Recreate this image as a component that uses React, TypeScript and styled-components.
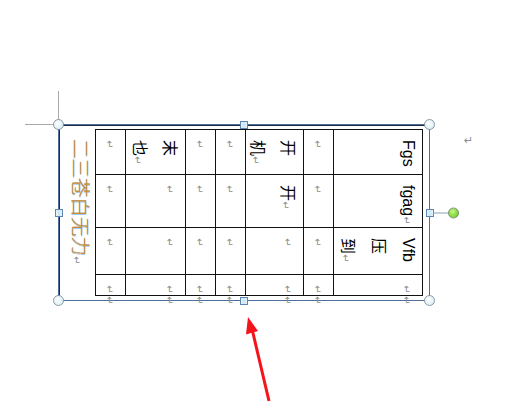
import React from "react";
import styled, { createGlobalStyle } from "styled-components";

const Global = createGlobalStyle`
  html, body { margin: 0; padding: 0; background: #fff; }
  body { font-family: "Liberation Sans", "Noto Sans CJK SC", sans-serif; }
`;

const Canvas = styled.div`
  position: relative;
  width: 529px;
  height: 415px;
  overflow: hidden;
  background: #fff;
`;

/* crop corner mark of the page margin */
const CropMark = styled.div`
  position: absolute;
  left: 25px;
  top: 91px;
  width: 33px;
  height: 33px;
  border-right: 1px solid #a8a8a8;
  border-bottom: 1px solid #a8a8a8;
`;

const TextBox = styled.div`
  position: absolute;
  left: 58px;
  top: 124px;
  width: 372px;
  height: 177px;
  box-sizing: border-box;
  border: 1px solid #4f6f9a;
  box-shadow: inset 1px 1px 0 #1c2c44;
  display: flex;
  align-items: flex-start;
  padding-top: 4px;
`;

const SideText = styled.div`
  width: 36px;
  height: 150px;
  box-sizing: border-box;
  writing-mode: vertical-rl;
  text-orientation: sideways;
  font-family: "Noto Sans CJK SC", sans-serif;
  font-weight: 300;
  font-size: 19.5px;
  line-height: 28px;
  padding-top: 10px;
  color: #c98e34;
  text-shadow: 1px 0 0 rgba(70, 150, 230, 0.5), -0.5px 0 0 rgba(120, 70, 20, 0.5);
`;

const TableWrap = styled.div`
  display: flex;
  flex-direction: column;
`;

const COLS = "29px 59px 29px 29px 57px 29px 88px";

const Grid = styled.div`
  display: grid;
  grid-template-columns: ${COLS};
  grid-template-rows: 44px 52px 46px 20px;
  gap: 1px;
  background: #111;
  border: 1px solid #111;
`;

const RowEnds = styled.div`
  display: grid;
  grid-template-columns: ${COLS};
  grid-template-rows: 14px;
  column-gap: 1px;
  padding: 0 1px;
`;

const Cell = styled.div<{ $bare?: boolean }>`
  background: ${(p) => (p.$bare ? "transparent" : "#fff")};
  writing-mode: vertical-rl;
  text-orientation: sideways;
  font-family: "Liberation Sans", "Noto Sans CJK SC", sans-serif;
  font-size: 16px;
  line-height: 28.5px;
  padding-top: ${(p) => (p.$bare ? "0px" : "10px")};
  box-sizing: border-box;
  color: #000;
  white-space: nowrap;
`;

const Han = styled.span`
  font-family: "Noto Sans CJK SC", sans-serif;
  font-weight: 400;
`;

const Line = styled.div``;

const Mark = styled.span`
  font-family: "DejaVu Sans", sans-serif;
  font-weight: 400;
  font-size: 10px;
  color: #8a8a8a;
  text-shadow: none;
`;

/* selection handles laid over the text box border */
const HandleFrame = styled.div`
  position: absolute;
  inset: -6px;
  display: flex;
  flex-direction: column;
  justify-content: space-between;
  pointer-events: none;
`;

const HandleRow = styled.div<{ $inset?: number }>`
  display: flex;
  justify-content: space-between;
  align-items: center;
  padding: 0 ${(p) => p.$inset ?? 0}px;
`;

const Knob = styled.div<{ $round?: boolean }>`
  position: relative;
  width: ${(p) => (p.$round ? 11 : 8)}px;
  height: ${(p) => (p.$round ? 11 : 8)}px;
  box-sizing: border-box;
  border-radius: ${(p) => (p.$round ? "50%" : "0")};
  border: 1px solid ${(p) => (p.$round ? "#8c9aa6" : "#5c86b0")};
  background: ${(p) =>
    p.$round
      ? "radial-gradient(circle at 40% 40%, #ffffff 0%, #dcf0f6 70%, #c6e2ec 100%)"
      : "linear-gradient(90deg, #e6f4fb 0%, #c9e5f3 50%, #e6f4fb 100%)"};
`;

/* rotation handle hanging off the right-middle knob */
const Rotator = styled.div`
  position: absolute;
  left: 100%;
  top: 50%;
  transform: translateY(-50%);
  display: flex;
  align-items: center;
`;

const RotStem = styled.div`
  width: 15px;
  height: 1px;
  background: #8aa0ba;
`;

const RotDot = styled.div`
  width: 11px;
  height: 11px;
  box-sizing: border-box;
  border-radius: 50%;
  border: 1px solid #6f8f62;
  background: radial-gradient(circle at 40% 35%, #c6f58a 0%, #86d93a 60%, #6cc02a 100%);
`;

const DocMark = styled.div`
  position: absolute;
  left: 464px;
  top: 134px;
  font-family: "DejaVu Sans", sans-serif;
  font-size: 11px;
  color: #8a8a8a;
`;

const ArrowSvg = styled.svg`
  position: absolute;
  left: 0;
  top: 0;
`;

const M = () => <Mark>↵</Mark>;

type CellDef = React.ReactNode[];

const rows: CellDef[][] = [
  [[<M />], [<Han>末</Han>, <><Han>也</Han><M /></>], [<M />], [<M />], [<Han>开</Han>, <><Han>机</Han><M /></>], [<M />], ["Fgs"]],
  [[<M />], [<M />], [<M />], [<M />], [<><Han>开</Han><M /></>], [<M />], [<>fgag<M /></>]],
  [[<M />], [<M />], [<M />], [<M />], [<M />], [<M />], ["Vfb", <Han>压</Han>, <><Han>到</Han><M /></>]],
  [[<M />], [<M />], [<M />], [<M />], [<M />], [<M />], [<M />]],
];

export default function App() {
  return (
    <Canvas>
      <Global />
      <CropMark />
      <TextBox>
        <SideText>
          二三苍白无力<M />
        </SideText>
        <TableWrap>
          <Grid>
            {rows.map((r, ri) =>
              r.map((c, ci) => (
                <Cell key={`${ri}-${ci}`}>
                  {c.map((l, li) => (
                    <Line key={li}>{l}</Line>
                  ))}
                </Cell>
              ))
            )}
          </Grid>
          <RowEnds>
            {Array.from({ length: 7 }).map((_, i) => (
              <Cell key={i} $bare>
                <Line>
                  <M />
                </Line>
              </Cell>
            ))}
          </RowEnds>
        </TableWrap>
        <HandleFrame>
          <HandleRow>
            <Knob $round />
            <Knob />
            <Knob $round />
          </HandleRow>
          <HandleRow $inset={1.5}>
            <Knob />
            <Knob>
              <Rotator>
                <RotStem />
                <RotDot />
              </Rotator>
            </Knob>
          </HandleRow>
          <HandleRow>
            <Knob $round />
            <Knob />
            <Knob $round />
          </HandleRow>
        </HandleFrame>
      </TextBox>
      <DocMark>↵</DocMark>
      <ArrowSvg width="529" height="415" viewBox="0 0 529 415">
        <line x1="269" y1="401" x2="252.5" y2="331" stroke="#f5141b" strokeWidth="3" />
        <polygon points="248,317 258,331 246,334.5" fill="#f5141b" />
      </ArrowSvg>
    </Canvas>
  );
}
